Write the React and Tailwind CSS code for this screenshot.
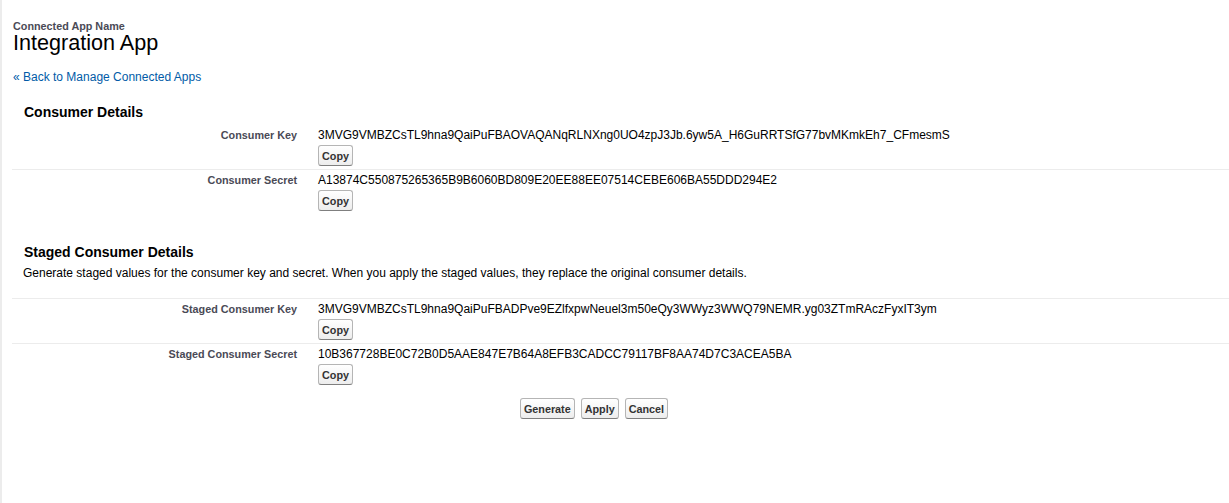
import React from 'react';

const consumer = [
    { label: 'Consumer Key', value: '3MVG9VMBZCsTL9hna9QaiPuFBAOVAQANqRLNXng0UO4zpJ3Jb.6yw5A_H6GuRRTSfG77bvMKmkEh7_CFmesmS' },
    { label: 'Consumer Secret', value: 'A13874C550875265365B9B6060BD809E20EE88EE07514CEBE606BA55DDD294E2' },
];

const staged = [
    { label: 'Staged Consumer Key', value: '3MVG9VMBZCsTL9hna9QaiPuFBADPve9EZlfxpwNeuel3m50eQy3WWyz3WWQ79NEMR.yg03ZTmRAczFyxIT3ym' },
    { label: 'Staged Consumer Secret', value: '10B367728BE0C72B0D5AAE847E7B64A8EFB3CADCC79117BF8AA74D7C3ACEA5BA' },
];

function Btn({ children }) {
    return (
        <button className="block h-[21px] px-[3px] rounded-[3px] border border-[#b5b5b5] border-b-[#7f7f7f] bg-linear-to-b from-white to-[#ededed] text-[10.8px] leading-[12px] font-bold text-[#333]">
            {children}
        </button>
    );
}

function DetailRow({ label, value, first }) {
    return (
        <div className={`flex ${first ? '' : 'border-t border-[#ececec]'}`}>
            <div className="w-[296px] shrink-0 pr-[11px] pt-[3px] text-right text-[10.8px] leading-[14px] font-bold text-[#4a4a56]">
                {label}
            </div>
            <div className="flex flex-col items-start gap-[3px] pl-[10px] pt-[3px] pb-[3px]">
                <div className="text-[12px] leading-[14px] text-black">{value}</div>
                <Btn>Copy</Btn>
            </div>
        </div>
    );
}

export default function App() {
    return (
        <div className="min-h-[503px] bg-white border-l-2 border-[#ececec] font-['Liberation_Sans',Arial,sans-serif] text-black">
            <div className="pl-[10px] pt-[20px]">
                {/* Page title */}
                <div className="pl-[1px]">
                    <div className="text-[10.8px] leading-[12px] font-bold text-[#4a4a56]">Connected App Name</div>
                    <h1 className="text-[21.6px] leading-[22px] font-normal text-black">Integration App</h1>
                </div>

                <div className="mt-[16px] pl-[1px] text-[12px] leading-[14px]">
                    <a href="#" className="text-[#015ba7]">« Back to Manage Connected Apps</a>
                </div>

                {/* Consumer details */}
                <h3 className="mt-[20px] pl-[12px] text-[14px] leading-[16px] font-bold">Consumer Details</h3>
                <div className="mt-[5px]">
                    {consumer.map((row, i) => (
                        <DetailRow key={row.label} {...row} first={i === 0} />
                    ))}
                </div>

                {/* Staged consumer details */}
                <h3 className="mt-[30px] pl-[12px] text-[14px] leading-[16px] font-bold">Staged Consumer Details</h3>
                <p className="mt-[6px] pl-[11px] text-[12px] leading-[14px]">
                    Generate staged values for the consumer key and secret. When you apply the staged values, they replace the original consumer details.
                </p>
                <div className="mt-[18px] border-t border-[#ececec]">
                    {staged.map((row, i) => (
                        <DetailRow key={row.label} {...row} first={i === 0} />
                    ))}
                </div>

                <div className="mt-[10px] flex justify-center gap-[6px] pr-[53px]">
                    <Btn>Generate</Btn>
                    <Btn>Apply</Btn>
                    <Btn>Cancel</Btn>
                </div>
            </div>
        </div>
    );
}
